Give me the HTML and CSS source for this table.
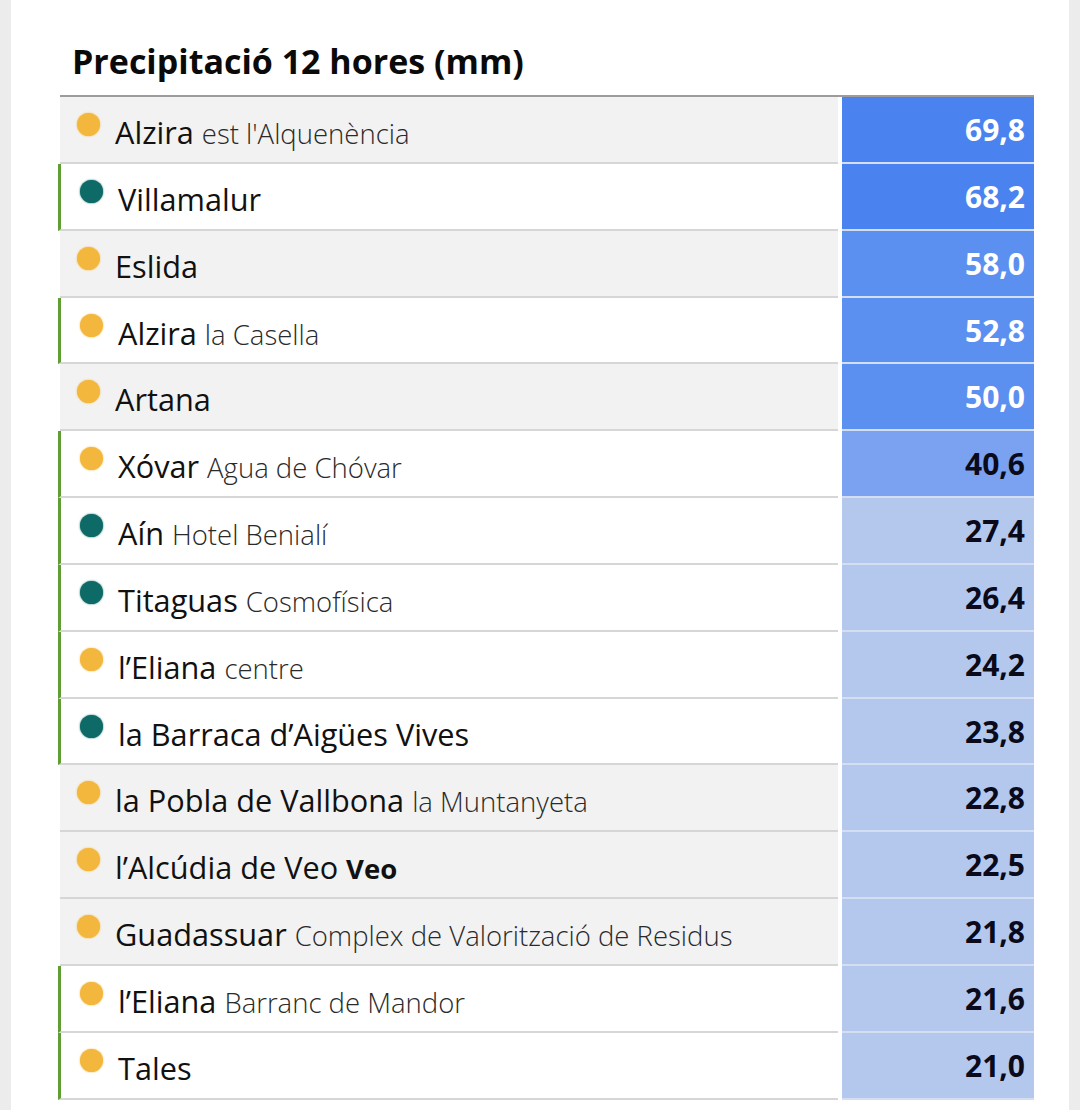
FILE: index.html
```html
<!DOCTYPE html>
<html lang="ca">
<head>
<meta charset="utf-8">
<title>Precipitació 12 hores (mm)</title>
<link rel="stylesheet" href="styles.css">
</head>
<body>
<main class="card">
  <h2 class="title">Precipitació 12 hores (mm)</h2>
  <div class="table">
    <div class="row gray"><div class="name"><span class="dot yellow"></span><span class="txt">Alzira <span class="sub">est l'Alquenència</span></span></div><div class="val v1">69,8</div></div>
    <div class="row green"><div class="name"><span class="dot teal"></span><span class="txt">Villamalur</span></div><div class="val v1">68,2</div></div>
    <div class="row gray"><div class="name"><span class="dot yellow"></span><span class="txt">Eslida</span></div><div class="val v2">58,0</div></div>
    <div class="row green"><div class="name"><span class="dot yellow"></span><span class="txt">Alzira <span class="sub">la Casella</span></span></div><div class="val v2">52,8</div></div>
    <div class="row gray"><div class="name"><span class="dot yellow"></span><span class="txt">Artana</span></div><div class="val v2">50,0</div></div>
    <div class="row green"><div class="name"><span class="dot yellow"></span><span class="txt">Xóvar <span class="sub">Agua de Chóvar</span></span></div><div class="val v3">40,6</div></div>
    <div class="row green"><div class="name"><span class="dot teal"></span><span class="txt">Aín <span class="sub">Hotel Benialí</span></span></div><div class="val v4">27,4</div></div>
    <div class="row green"><div class="name"><span class="dot teal"></span><span class="txt">Titaguas <span class="sub">Cosmofísica</span></span></div><div class="val v4">26,4</div></div>
    <div class="row green"><div class="name"><span class="dot yellow"></span><span class="txt">l’Eliana <span class="sub">centre</span></span></div><div class="val v4">24,2</div></div>
    <div class="row green"><div class="name"><span class="dot teal"></span><span class="txt">la Barraca d’Aigües Vives</span></div><div class="val v4">23,8</div></div>
    <div class="row gray"><div class="name"><span class="dot yellow"></span><span class="txt">la Pobla de Vallbona <span class="sub">la Muntanyeta</span></span></div><div class="val v4">22,8</div></div>
    <div class="row gray"><div class="name"><span class="dot yellow"></span><span class="txt">l’Alcúdia de Veo <span class="sub bold">Veo</span></span></div><div class="val v4">22,5</div></div>
    <div class="row gray"><div class="name"><span class="dot yellow"></span><span class="txt">Guadassuar <span class="sub">Complex de Valorització de Residus</span></span></div><div class="val v4">21,8</div></div>
    <div class="row green"><div class="name"><span class="dot yellow"></span><span class="txt">l’Eliana <span class="sub">Barranc de Mandor</span></span></div><div class="val v4">21,6</div></div>
    <div class="row green"><div class="name"><span class="dot yellow"></span><span class="txt">Tales</span></div><div class="val v4">21,0</div></div>
  </div>
</main>
</body>
</html>
```

FILE: styles.css
```css
html, body {
  margin: 0;
  padding: 0;
}
body {
  background: #ececec;
  font-family: "Open Sans", "Liberation Sans", sans-serif;
  color: #111;
  height: 1110px;
  overflow: hidden;
}
.card {
  background: #fff;
  margin-left: 11px;
  width: 1058px;
  box-sizing: border-box;
  padding: 38px 35px 0 49px;
  min-height: 1110px;
}
.title {
  margin: 0 0 11px 0;
  padding-left: 12px;
  font-size: 34px;
  font-weight: 700;
  line-height: 46px;
  color: #0a0a0a;
}
.table {
  border-top: 2px solid #9c9c9c;
  width: 974px;
}
.row {
  display: grid;
  grid-template-columns: 1fr 192px;
  column-gap: 4px;
}
.name {
  display: flex;
  align-items: flex-start;
  height: 64.85px;
  box-sizing: content-box;
  border-bottom: 2px solid #d6d6d6;
  overflow: hidden;
  white-space: nowrap;
}
.row.gray .name {
  background: #f2f2f2;
  padding-left: 17px;
}
.row.green .name {
  background: #fff;
  margin-left: -2px;
  border-left: 3px solid #5e9e33;
  padding-left: 19px;
}
.dot {
  flex: none;
  width: 23px;
  height: 23px;
  border-radius: 50%;
  margin-top: 16px;
  margin-right: 15px;
}
.dot.yellow {
  background: #f3b73e;
  box-shadow: 0 0 2px #f3b73e;
}
.dot.teal {
  background: #0d6a66;
  box-shadow: 0 0 2px #0d6a66;
}
.txt {
  font-size: 30.7px;
  line-height: 40px;
  margin-top: 15px;
  color: #111;
}
.sub {
  font-size: 27.5px;
  font-weight: 300;
  color: #2a2a2a;
}
.sub.bold {
  font-weight: 700;
  color: #111;
}
.val {
  height: 64.85px;
  border-bottom: 2px solid #d4def2;
  box-sizing: content-box;
  text-align: right;
  padding-right: 9px;
  font-size: 30px;
  font-weight: 700;
  line-height: 40px;
}
.val::before {
  content: "";
  display: block;
  height: 13px;
}
.v1 { background: #4a83f0; color: #fff; }
.v2 { background: #5b8ff0; color: #fff; }
.v3 { background: #7aa2f0; color: #0a0a1a; }
.v4 { background: #b4c8ee; color: #0a0a1a; }
```
